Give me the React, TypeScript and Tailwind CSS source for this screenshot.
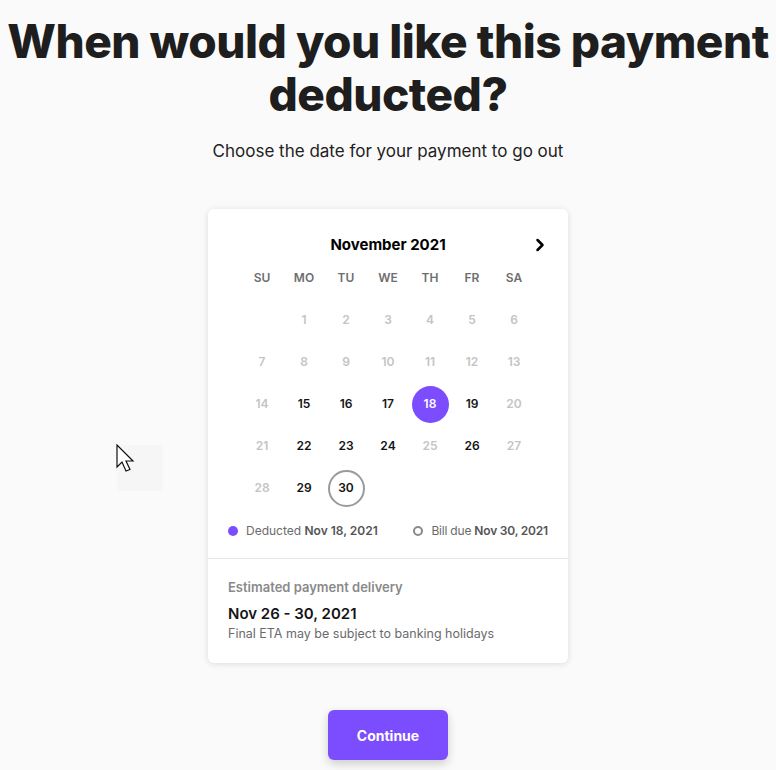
import React from "react";

const weeks: (number | null)[][] = [
  [null, 1, 2, 3, 4, 5, 6],
  [7, 8, 9, 10, 11, 12, 13],
  [14, 15, 16, 17, 18, 19, 20],
  [21, 22, 23, 24, 25, 26, 27],
  [28, 29, 30, null, null, null, null],
];
const active = new Set([15, 16, 17, 19, 22, 23, 24, 26, 29]);

function Day({ d }: { d: number | null }) {
  if (d === null) return <div className="h-[42px]" />;
  if (d === 18)
    return (
      <div className="h-[42px] flex items-center justify-center">
        <div className="w-[37px] h-[37px] rounded-full bg-[#7c4dff] text-white flex items-center justify-center text-[12px] font-semibold">
          18
        </div>
      </div>
    );
  if (d === 30)
    return (
      <div className="h-[42px] flex items-center justify-center">
        <div className="w-[37px] h-[37px] rounded-full border-2 border-[#9a9a9a] text-[#111] flex items-center justify-center text-[12px] font-semibold">
          30
        </div>
      </div>
    );
  return (
    <div
      className={
        "h-[42px] flex items-center justify-center text-[12px] font-semibold " +
        (active.has(d) ? "text-[#141414]" : "text-[#c4c4c4]")
      }
    >
      {d}
    </div>
  );
}

export default function App() {
  return (
    <div className="relative min-h-screen bg-[#fafafa] flex flex-col items-center font-['Inter',sans-serif]">
      <h1 className="mt-[15px] text-[46px] leading-[53px] font-extrabold text-[#1e1e1e] text-center tracking-[-0.5px]">
        When would you like this payment
        <br />
        deducted?
      </h1>
      <p className="mt-[19px] text-[17px] leading-[22px] text-[#222]">
        Choose the date for your payment to go out
      </p>

      <div className="mt-[47px] w-[360px] bg-white rounded-md shadow-[0_1px_6px_rgba(0,0,0,0.12)]">
        <div className="pt-[24px]">
          <div className="relative h-[24px] flex items-center justify-center">
            <span className="text-[15px] font-bold text-black">November 2021</span>
            <svg
              className="absolute right-[18px] top-[2px]"
              width="20"
              height="20"
              viewBox="0 0 24 24"
              fill="none"
              stroke="black"
              strokeWidth="3"
              strokeLinecap="round"
              strokeLinejoin="round"
            >
              <path d="m9 18 6-6-6-6" />
            </svg>
          </div>
          <div className="grid grid-cols-[repeat(7,42px)] justify-center">
            {["SU", "MO", "TU", "WE", "TH", "FR", "SA"].map((w) => (
              <div
                key={w}
                className="h-[42px] flex items-center justify-center text-[12px] font-semibold text-[#6e6e6e]"
              >
                {w}
              </div>
            ))}
            {weeks.flat().map((d, i) => (
              <Day key={i} d={d} />
            ))}
          </div>
          <div className="mt-[12px] pb-[17px] px-5 h-[20px] box-content flex items-center justify-between text-[12px] text-[#6b6b6b]">
            <div className="flex items-center gap-[8px]">
              <span className="w-[10px] h-[10px] rounded-full bg-[#7c4dff]" />
              <span>
                Deducted <b className="font-semibold text-[#555]">Nov 18, 2021</b>
              </span>
            </div>
            <div className="flex items-center gap-[8px]">
              <span className="w-[10px] h-[10px] rounded-full border-2 border-[#8a8a8a]" />
              <span className="tracking-[-0.2px]">
                Bill due <b className="font-semibold text-[#555]">Nov 30, 2021</b>
              </span>
            </div>
          </div>
        </div>
        <div className="border-t border-[#e6e6e6] px-5 pt-[19px] pb-[21px]">
          <div className="text-[13px] leading-[18px] font-semibold text-[#8a8a8a]">
            Estimated payment delivery
          </div>
          <div className="mt-[7px] text-[15px] leading-[22px] font-semibold text-[#141414]">
            Nov 26 - 30, 2021
          </div>
          <div className="mt-[1px] text-[12.5px] leading-[16px] text-[#6b6b6b]">
            Final ETA may be subject to banking holidays
          </div>
        </div>
      </div>

      <button className="mt-[47px] w-[120px] h-[50px] rounded-md bg-[#7c4dff] text-white text-[14px] font-bold shadow-[0_4px_10px_rgba(0,0,0,0.18)]">
        Continue
      </button>

      <div className="absolute left-[117px] top-[445px] w-[46px] h-[46px] bg-[#f6f6f6] rounded-sm" />
      <svg
        className="absolute left-[116px] top-[444px]"
        width="20"
        height="30"
        viewBox="0 0 20 30"
      >
        <path
          d="M1 1 L1 23 L6 18 L10 27 L14 25.5 L10 17 L17 17 Z"
          fill="white"
          stroke="#111"
          strokeWidth="1.2"
          strokeLinejoin="miter"
        />
      </svg>
    </div>
  );
}
